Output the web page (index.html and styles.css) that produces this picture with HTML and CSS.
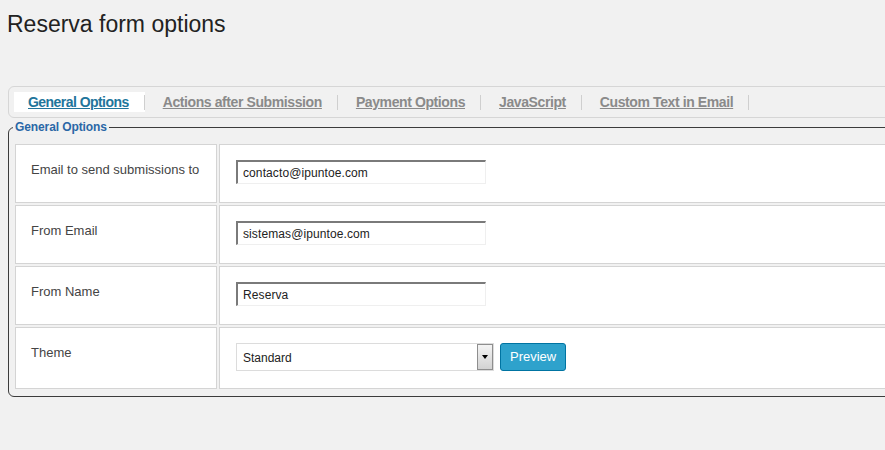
FILE: index.html
```html
<!DOCTYPE html>
<html>
<head>
<meta charset="utf-8">
<title>Reserva form options</title>
<link rel="stylesheet" href="styles.css">
</head>
<body>
<div class="wrap">
  <h1 class="title">Reserva form options</h1>
  <div class="tabbar">
    <ul class="tabs">
      <li class="tab active"><a href="#">General Options</a></li>
      <li class="tab"><a href="#">Actions after Submission</a></li>
      <li class="tab"><a href="#">Payment Options</a></li>
      <li class="tab"><a href="#">JavaScript</a></li>
      <li class="tab"><a href="#">Custom Text in Email</a></li>
    </ul>
  </div>
  <fieldset class="group">
    <legend class="group-title">General Options</legend>
    <table class="form-table">
      <tr>
        <td class="label">Email to send submissions to</td>
        <td class="field"><input class="text" type="text" value="contacto@ipuntoe.com"></td>
      </tr>
      <tr>
        <td class="label">From Email</td>
        <td class="field"><input class="text" type="text" value="sistemas@ipuntoe.com"></td>
      </tr>
      <tr>
        <td class="label">From Name</td>
        <td class="field"><input class="text" type="text" value="Reserva"></td>
      </tr>
      <tr class="theme-row">
        <td class="label">Theme</td>
        <td class="field">
          <div class="theme-controls">
            <div class="select">
              <span class="select-value">Standard</span>
              <span class="select-arrow"><span class="caret"></span></span>
            </div>
            <button class="btn-preview" type="button">Preview</button>
          </div>
        </td>
      </tr>
    </table>
  </fieldset>
</div>
</body>
</html>
```
FILE: styles.css
```css
html, body {
  margin: 0;
  padding: 0;
  background: #f1f1f1;
  overflow: hidden;
}
body {
  font-family: "Liberation Sans", Arial, sans-serif;
  color: #333;
}
.wrap {
  padding-left: 8px;
  width: 1100px;
}
.title {
  margin: 10px 0 47px -1px;
  font-size: 23px;
  line-height: 29px;
  font-weight: normal;
  color: #222;
}
.tabbar {
  border: 1px solid #d6d6d6;
  border-radius: 6px;
  padding: 5px;
  background: #f1f1f1;
}
.tabs {
  list-style: none;
  margin: 0;
  padding: 0;
  display: flex;
}
.tab {
  display: flex;
  align-items: center;
  height: 20px;
  padding-left: 14px;
  margin-right: 4px;
}
.tab::after {
  content: "";
  display: block;
  width: 1px;
  height: 15px;
  background: #cfcfcf;
  margin-left: 15px;
}
.tab.active {
  background: #fff;
}
.tab a {
  font-size: 14px;
  line-height: 20px;
  font-weight: bold;
  letter-spacing: -0.4px;
  color: #8a8a8a;
  text-decoration: underline;
}
.tab.active a {
  color: #21759b;
  letter-spacing: -0.55px;
}
.group {
  margin: 2px 0 0 0;
  border: 1px solid #3c3c3c;
  border-radius: 6px;
  padding: 8px 4px 5px 4px;
}
.group-title {
  font-size: 12px;
  line-height: 14px;
  font-weight: bold;
  letter-spacing: -0.1px;
  color: #2a67a6;
  padding: 0 2px;
}
.form-table {
  border-collapse: separate;
  border-spacing: 2px;
  width: 1200px;
}
.form-table td {
  background: #fff;
  border: 1px solid #d4d4d4;
  vertical-align: top;
}
.label {
  width: 170px;
  padding: 17px 15px 0 15px;
  font-size: 13px;
  line-height: 16px;
  color: #444;
}
.field {
  padding: 15px 16px 18px 16px;
  height: 24px;
}
.theme-row .field {
  padding: 15px 16px 17px 16px;
  height: 28px;
}
.text {
  display: block;
  box-sizing: border-box;
  width: 250px;
  height: 24px;
  margin: 0;
  padding: 0 0 0 5px;
  border-top: 2px solid #7a7a7a;
  border-left: 2px solid #7a7a7a;
  border-right: 1px solid #efefef;
  border-bottom: 1px solid #efefef;
  background: #fff;
  font-family: "Liberation Sans", Arial, sans-serif;
  font-size: 12px;
  letter-spacing: 0.1px;
  color: #222;
  outline: none;
}
.theme-controls {
  display: flex;
  align-items: center;
  gap: 6px;
}
.select {
  box-sizing: border-box;
  width: 258px;
  height: 28px;
  border: 1px solid #dcdcdc;
  background: #fff;
  display: flex;
  align-items: center;
  justify-content: space-between;
  padding: 0 0 0 6px;
}
.select-value {
  font-size: 12px;
  color: #222;
  margin-top: 2px;
}
.select-arrow {
  box-sizing: border-box;
  width: 16px;
  height: 26px;
  border: 1px solid #8e8e8e;
  background: linear-gradient(#f4f4f4, #d2d2d2);
  display: flex;
  align-items: center;
  justify-content: center;
}
.caret {
  width: 0;
  height: 0;
  border-left: 3px solid transparent;
  border-right: 3px solid transparent;
  border-top: 4px solid #000;
}
.btn-preview {
  box-sizing: border-box;
  height: 28px;
  padding: 0 9px;
  margin-top: -1px;
  border: 1px solid #0074a2;
  border-radius: 3px;
  background: #2ea2cc;
  color: #fff;
  font-family: "Liberation Sans", Arial, sans-serif;
  font-size: 13px;
  line-height: 26px;
}
```
